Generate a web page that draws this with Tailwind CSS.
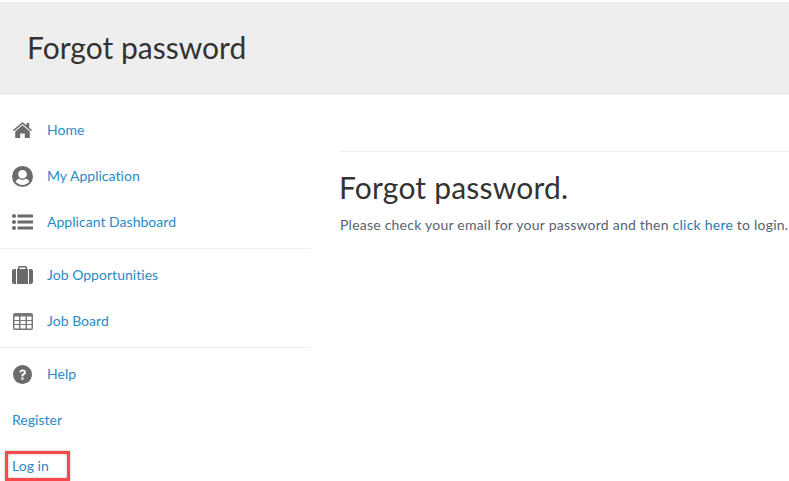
<!DOCTYPE html>
<html lang="en">
<head>
  <meta charset="UTF-8">
  <title>Forgot password</title>
  <script src="https://cdn.jsdelivr.net/npm/@tailwindcss/browser@4"></script>
</head>
<body class="bg-white h-[481px] w-[789px] overflow-hidden font-['Lato',sans-serif] text-[14px]">

  <!-- Header -->
  <header class="mt-[2px] h-[93px] bg-[#eeeeee] pl-[27px] pb-[3px] flex items-center">
    <h1 class="text-[30px] text-[#333333] font-normal tracking-[0.02px]">Forgot password</h1>
  </header>

  <div class="flex">
    <!-- Sidebar -->
    <nav class="w-[310px] shrink-0 text-[#2a8ac4] tracking-[0.03px]">
      <a href="#" class="h-[46px] mt-[12px] flex items-center">
        <span class="w-[47px] pl-[13px] shrink-0">
          <svg class="block" width="19" height="16" viewBox="0 0 19 16" fill="#6b6b6b"><path d="M9.500 0 13.500 3.400V1h2.700v4.700L19 8.100l-1 1.200L9.500 2.100 1 9.300 0 8.100z"/><path d="M9.500 3.300 16.800 9.400V16h-5v-4.500h-4.600V16h-5V9.400z"/></svg>
        </span>
        <span class="pb-[2px]">Home</span>
      </a>
      <a href="#" class="h-[46px] flex items-center">
        <span class="w-[47px] pl-[12px] shrink-0">
          <svg class="block" width="21" height="21" viewBox="0 0 21 21"><circle cx="10.500" cy="10.500" r="10.500" fill="#6b6b6b"/><circle cx="10.500" cy="8.200" r="4.300" fill="#fff"/><path d="M3.700 15.800c.8-1.900 2.200-2.900 3.600-3 .9.700 2 1.100 3.200 1.100s2.300-.4 3.200-1.100c1.400.1 2.800 1.100 3.600 3-1.600 1.900-4 3.200-6.800 3.200s-5.200-1.300-6.800-3.200z" fill="#fff"/></svg>
        </span>
        <span class="pb-[2px]">My Application</span>
      </a>
      <a href="#" class="h-[46px] flex items-center">
        <span class="w-[47px] pl-[12px] shrink-0">
          <svg class="block" width="21" height="16" viewBox="0 0 21 16" fill="#6b6b6b"><circle cx="2" cy="2" r="2"/><circle cx="2" cy="8" r="2"/><circle cx="2" cy="14" r="2"/><rect x="5.500" y="0.500" width="15.500" height="3"/><rect x="5.500" y="6.500" width="15.500" height="3"/><rect x="5.500" y="12.500" width="15.500" height="3"/></svg>
        </span>
        <span class="pb-[2px]">Applicant Dashboard</span>
      </a>
      <div class="border-t border-[#eeeeee] mt-[3px]"></div>
      <a href="#" class="h-[46px] mt-[3px] flex items-center">
        <span class="w-[47px] pl-[12px] shrink-0">
          <svg class="block" width="21" height="18" viewBox="0 0 21 18" fill="#6b6b6b"><path d="M6 3V1.500C6 .7 6.700 0 7.500 0h6c.8 0 1.500.7 1.500 1.500V3h-1.500V1.500h-6V3z"/><path d="M5 3h11v15H5z"/><path d="M0 5c0-1.100.9-2 2-2h2v15H2c-1.100 0-2-.9-2-2zM17 3h2c1.100 0 2 .9 2 2v11c0 1.100-.9 2-2 2h-2z"/></svg>
        </span>
        <span class="pb-[2px]">Job Opportunities</span>
      </a>
      <a href="#" class="h-[46px] flex items-center">
        <span class="w-[47px] pl-[13px] shrink-0">
          <svg class="block" width="20" height="17" viewBox="0 0 20 17"><rect x="0" y="0" width="20" height="17" rx="2" fill="#777777"/><g fill="#fff"><rect x="1.500" y="3.500" width="4.500" height="3.500"/><rect x="7.500" y="3.500" width="5" height="3.500"/><rect x="14" y="3.500" width="4.500" height="3.500"/><rect x="1.500" y="8" width="4.500" height="3"/><rect x="7.500" y="8" width="5" height="3"/><rect x="14" y="8" width="4.500" height="3"/><rect x="1.500" y="12" width="4.500" height="3.500"/><rect x="7.500" y="12" width="5" height="3.500"/><rect x="14" y="12" width="4.500" height="3.500"/></g></svg>
        </span>
        <span class="pb-[2px]">Job Board</span>
      </a>
      <div class="border-t border-[#eeeeee] mt-[3px]"></div>
      <a href="#" class="h-[46px] mt-[3px] flex items-center">
        <span class="w-[47px] pl-[13px] shrink-0">
          <svg class="block" width="19" height="19" viewBox="0 0 19 19"><circle cx="9.500" cy="9.500" r="9.500" fill="#6b6b6b"/><path d="M6.300 7.300C6.500 5.400 7.800 4.400 9.700 4.400c1.900 0 3.300 1.100 3.300 2.800 0 1.400-.8 2-1.800 2.700-.7.500-.9.800-.9 1.500H8.300c0-1.300.4-1.900 1.300-2.600.8-.6 1.300-.9 1.300-1.500 0-.6-.5-1-1.200-1-.8 0-1.200.5-1.400 1.200z" fill="#fff"/><rect x="8.300" y="12.500" width="2.200" height="2.200" fill="#fff"/></svg>
        </span>
        <span class="pb-[2px]">Help</span>
      </a>
      <a href="#" class="h-[46px] pl-[12px] pb-[2px] flex items-center">Register</a>
      <div class="relative">
        <a href="#" class="h-[46px] pl-[12px] pb-[2px] flex items-center">Log in</a>
        <div class="absolute left-[5px] top-[8px] w-[65px] h-[30px] border-[3px] border-[#f9474c] shadow-[0_0_3px_rgba(0,0,0,0.25),inset_0_0_3px_rgba(0,0,0,0.25)]"></div>
      </div>
    </nav>

    <!-- Main -->
    <main class="flex-1 pl-[30px] min-w-0">
      <div class="mt-[56px] border-t border-[#eeeeee]"></div>
      <h2 class="mt-[16px] -ml-[1px] text-[30px] leading-[38px] tracking-[0.2px] text-[#333333] font-normal whitespace-nowrap">Forgot password.</h2>
      <p class="mt-[9px] text-[#566470] leading-[20px] tracking-[0.23px] whitespace-nowrap">Please check your email for your password and then <a href="#" class="text-[#2a7ab0]">click here</a> to login.</p>
    </main>
  </div>

</body>
</html>
